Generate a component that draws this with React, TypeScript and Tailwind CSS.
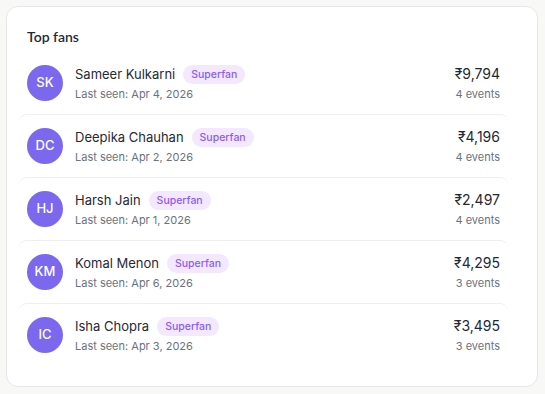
import React from 'react';

interface Fan {
  initials: string;
  name: string;
  lastSeen: string;
  amount: string;
  events: number;
}

const fans: Fan[] = [
  { initials: 'SK', name: 'Sameer Kulkarni', lastSeen: 'Apr 4, 2026', amount: '₹9,794', events: 4 },
  { initials: 'DC', name: 'Deepika Chauhan', lastSeen: 'Apr 2, 2026', amount: '₹4,196', events: 4 },
  { initials: 'HJ', name: 'Harsh Jain', lastSeen: 'Apr 1, 2026', amount: '₹2,497', events: 4 },
  { initials: 'KM', name: 'Komal Menon', lastSeen: 'Apr 6, 2026', amount: '₹4,295', events: 3 },
  { initials: 'IC', name: 'Isha Chopra', lastSeen: 'Apr 3, 2026', amount: '₹3,495', events: 3 },
];

function FanRow({ fan, first }: { fan: Fan; first: boolean }) {
  return (
    <div
      className={`flex items-center gap-3 px-2 py-3 rounded-lg ${
        first ? '' : 'border-t border-[#efefef]'
      }`}
    >
      <div className="w-9 h-9 rounded-full bg-[#7b68ee] text-white flex items-center justify-center text-[13px] font-medium flex-shrink-0">
        {fan.initials}
      </div>
      <div className="flex-1 min-w-0">
        <div className="flex items-center gap-2 h-5">
          <span className="text-[13px] leading-5 text-[#1f2937] truncate">{fan.name}</span>
          <span className="text-[10.5px] leading-[19px] px-2 rounded-full bg-[#f3e8ff] text-[#8b5cf6] font-medium">
            Superfan
          </span>
        </div>
        <p className="text-[11px] leading-4 text-[#6b7280] mt-0.5">Last seen: {fan.lastSeen}</p>
      </div>
      <div className="text-right flex-shrink-0">
        <p className="text-sm text-[#1f2937] leading-5">{fan.amount}</p>
        <p className="text-[11px] leading-4 text-[#6b7280] mt-0.5">{fan.events} events</p>
      </div>
    </div>
  );
}

export default function App() {
  return (
    <div className="min-h-screen bg-[#f8f8f7] pt-1.5 pl-1.5 pr-[7px] pb-2" style={{ fontFamily: 'Inter, "Liberation Sans", sans-serif' }}>
      <div className="bg-white border border-[#e5e7eb] rounded-xl pt-5 pb-5 pl-3 pr-[29px]">
        <h2 className="text-sm font-semibold text-[#1f2937] px-2 mb-[5px]" style={{ fontFamily: 'Lato, Inter, sans-serif' }}>
          Top fans
        </h2>
        <div>
          {fans.map((fan, i) => (
            <FanRow key={fan.initials} fan={fan} first={i === 0} />
          ))}
        </div>
      </div>
    </div>
  );
}
